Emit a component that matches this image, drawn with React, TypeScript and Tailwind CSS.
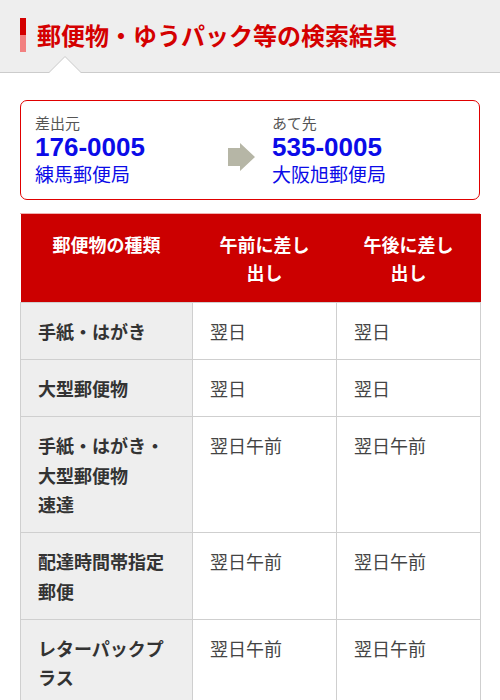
import React from "react";

const jp = { fontFamily: '"Noto Sans CJK JP", "Noto Sans", sans-serif' };

const rows: { label: React.ReactNode; am: string; pm: string }[] = [
  { label: "手紙・はがき", am: "翌日", pm: "翌日" },
  { label: "大型郵便物", am: "翌日", pm: "翌日" },
  {
    label: (
      <>
        手紙・はがき・
        <br />
        大型郵便物
        <br />
        速達
      </>
    ),
    am: "翌日午前",
    pm: "翌日午前",
  },
  {
    label: (
      <>
        配達時間帯指定
        <br />
        郵便
      </>
    ),
    am: "翌日午前",
    pm: "翌日午前",
  },
  {
    label: (
      <>
        レターパックプ
        <br />
        ラス
      </>
    ),
    am: "翌日午前",
    pm: "翌日午前",
  },
];

export default function App() {
  return (
    <div className="w-[500px] min-h-[700px] bg-white" style={jp}>
      {/* Header */}
      <div className="relative h-[73px] bg-[#eeeeee] border-b border-[#cccccc]">
        <div className="flex items-center pl-5 pt-[18px]">
          <div className="flex flex-col w-[6px]">
            <div className="h-[17px] bg-[#d40000]" />
            <div className="h-[17px] bg-[#f28080]" />
          </div>
          <h1 className="ml-[11px] text-[24px] leading-[34px] font-bold text-[#d40000]">
            郵便物・ゆうパック等の検索結果
          </h1>
        </div>
        <svg
          className="absolute left-[49px] top-[56px]"
          width="32"
          height="18"
          viewBox="0 0 32 18"
        >
          <polygon points="0,17 16,1 32,17 32,18 0,18" fill="#ffffff" />
          <polyline points="0,16.5 16,0.5 32,16.5" fill="none" stroke="#cccccc" strokeWidth="1" />
        </svg>
      </div>

      {/* Route box */}
      <div className="mx-5 mt-[27px] h-[100px] rounded-[7px] border-[1.5px] border-[#e00000] pt-[12px] pl-[14px] flex">
        <div className="w-[193px] flex flex-col">
          <div className="text-[15px] leading-[20px] text-[#555555]">差出元</div>
          <div
            className="text-[26px] leading-[28px] font-bold text-[#0b0be8]"
            style={{ fontFamily: '"Liberation Sans", Arial, sans-serif' }}
          >
            176-0005
          </div>
          <div className="text-[19px] leading-[26px] text-[#0b0be8]">練馬郵便局</div>
        </div>
        <div className="flex items-center pt-[2px]">
          <svg width="27" height="28" viewBox="0 0 27 28">
            <polygon points="0,5 12,5 12,0 27,14 12,28 12,23 0,23" fill="#b6b6a6" />
          </svg>
        </div>
        <div className="ml-[17px] flex flex-col">
          <div className="text-[15px] leading-[20px] text-[#555555]">あて先</div>
          <div
            className="text-[26px] leading-[28px] font-bold text-[#0b0be8]"
            style={{ fontFamily: '"Liberation Sans", Arial, sans-serif' }}
          >
            535-0005
          </div>
          <div className="text-[19px] leading-[26px] text-[#0b0be8]">大阪旭郵便局</div>
        </div>
      </div>

      {/* Table */}
      <div className="mx-5 mt-[13px] border-t border-[#f0b0b0]">
        <table className="w-[460px] table-fixed border-collapse">
          <colgroup>
            <col className="w-[172px]" />
            <col className="w-[144px]" />
            <col className="w-[144px]" />
          </colgroup>
          <thead>
            <tr className="bg-[#cc0000] text-white text-[18px] leading-[28px] font-bold">
              <th className="pt-[16px] pb-[16px] align-top font-bold">郵便物の種類</th>
              <th className="pt-[16px] pb-[16px] align-top font-bold">
                午前に差し
                <br />
                出し
              </th>
              <th className="pt-[16px] pb-[16px] align-top font-bold">
                午後に差し
                <br />
                出し
              </th>
            </tr>
          </thead>
          <tbody>
            {rows.map((r, i) => (
              <tr key={i} className="text-[18px] leading-[29.5px]">
                <td className="border border-[#cfcfcf] bg-[#eeeeee] px-[17px] pt-[14px] pb-[12.5px] align-top font-bold text-[#333333]">
                  {r.label}
                </td>
                <td className="border border-[#cfcfcf] px-[17px] pt-[14px] pb-[12.5px] align-top text-[#444444]">
                  {r.am}
                </td>
                <td className="border border-[#cfcfcf] px-[17px] pt-[14px] pb-[12.5px] align-top text-[#444444]">
                  {r.pm}
                </td>
              </tr>
            ))}
          </tbody>
        </table>
      </div>
    </div>
  );
}
